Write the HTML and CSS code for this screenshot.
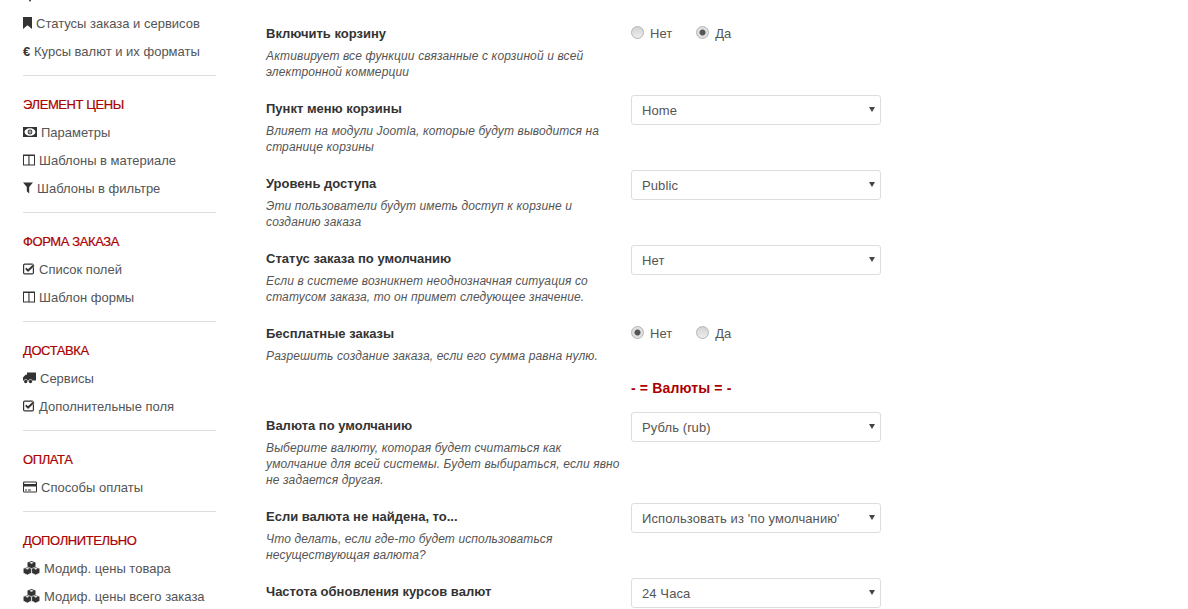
FILE: index.html
```html
<!DOCTYPE html>
<html lang="ru">
<head>
    <meta charset="UTF-8">
    <meta name="viewport" content="width=device-width, initial-scale=1.0">
    <title>Настройки корзины</title>
    <link rel="stylesheet" href="styles.css">
</head>
<body>
    <svg class="sprite" aria-hidden="true">
        <symbol id="i-marker" viewBox="0 0 14 14"><path d="M7 14 3.200 7.500A4.400 4.400 0 1 1 10.800 7.500Z"/></symbol>
        <symbol id="i-bookmark" viewBox="0 0 9 12"><path d="M0 0h9v12L4.500 8.200 0 12Z"/></symbol>
        <symbol id="i-money" viewBox="0 0 14 10"><path fill-rule="evenodd" d="M0 0h14v10H0ZM7 1.200C3.800 1.200 1.600 3 1.600 5S3.800 8.800 7 8.800 12.400 7 12.400 5 10.200 1.200 7 1.200Z"/><path fill-rule="evenodd" d="M7 2.600a2.400 2.400 0 1 1 0 4.800 2.400 2.400 0 0 1 0-4.800ZM7 3.600a1.400 1.400 0 1 0 0 2.800 1.400 1.400 0 0 0 0-2.800Z"/><path d="M6.600 3.800h.8v2.400h-.8Z"/></symbol>
        <symbol id="i-columns" viewBox="0 0 12 11"><path fill-rule="evenodd" d="M0 0h12v11H0ZM1 1.500V10h4.400V1.500ZM6.500 1.500V10H11V1.500Z"/></symbol>
        <symbol id="i-filter" viewBox="0 0 10 11"><path d="M0 0h10L6.200 4.600V11L3.800 8.800V4.600Z"/></symbol>
        <symbol id="i-check" viewBox="0 0 12 11"><path fill-rule="evenodd" d="M1.800 0h7.400A1.800 1.800 0 0 1 11 1.800v7.400A1.800 1.800 0 0 1 9.200 11H1.800A1.800 1.800 0 0 1 0 9.200V1.800A1.800 1.800 0 0 1 1.800 0ZM1.800 1.200a.6.6 0 0 0-.6.6v7.400a.6.6 0 0 0 .6.6h7.400a.6.6 0 0 0 .6-.6V1.800a.6.6 0 0 0-.6-.6Z"/><path stroke="#fff" stroke-width=".5" d="M1.900 5.400 3.400 3.900 5 5.500 10 .8 11.700 2.400 5 8.800Z"/></symbol>
        <symbol id="i-truck" viewBox="0 0 13 11"><path d="M4 0h9v8H9.300a1.900 1.900 0 0 0-3.600 0H4.500a1.900 1.900 0 0 0-3.600 0H0V5L2.600 2.200H4Z"/><circle cx="2.700" cy="9" r="1.700"/><circle cx="7.500" cy="9" r="1.700"/></symbol>
        <symbol id="i-card" viewBox="0 0 14 11"><path fill-rule="evenodd" d="M1.200 0h11.600A1.200 1.200 0 0 1 14 1.200v8.600a1.200 1.200 0 0 1-1.200 1.200H1.200A1.200 1.200 0 0 1 0 9.800V1.200A1.200 1.200 0 0 1 1.200 0ZM1 5v4.800a.2.200 0 0 0 .2.200h11.600a.2.200 0 0 0 .2-.2V5ZM1.200 1v1.600h11.600V1Z"/><path d="M2 8h2v1H2ZM5 8h3v1H5Z"/></symbol>
        <symbol id="i-cubes" viewBox="0 0 17 14"><path d="M8.500 0 12.500 1.500v4.800L8.500 7.800 4.500 6.300V1.500Z"/><path stroke="#fff" stroke-width=".6" d="M4.300 6 8.400 7.500v4.500L4.300 14 .2 12V7.500Z"/><path stroke="#fff" stroke-width=".6" d="M12.700 6 16.800 7.500v4.500L12.700 14 8.600 12V7.500Z"/><path fill="#fff" d="M8.500 1 6.300 1.800 8.500 2.700 10.700 1.800ZM4.300 7 2.200 7.800 4.300 8.600 6.400 7.800ZM12.700 7 10.600 7.800 12.700 8.600 14.800 7.800Z"/></symbol>
    </svg>

    <div class="page">
        <aside class="sidebar">
            <a class="nav-item nav-cut"><svg class="ico w14"><use href="#i-marker"/></svg></a>
            <a class="nav-item"><svg class="ico w9"><use href="#i-bookmark"/></svg>Статусы заказа и сервисов</a>
            <a class="nav-item"><span class="euro">€</span>Курсы валют и их форматы</a>
            <hr>
            <h4>Элемент цены</h4>
            <a class="nav-item"><svg class="ico w14"><use href="#i-money"/></svg>Параметры</a>
            <a class="nav-item"><svg class="ico w12"><use href="#i-columns"/></svg>Шаблоны в материале</a>
            <a class="nav-item"><svg class="ico w10"><use href="#i-filter"/></svg>Шаблоны в фильтре</a>
            <hr>
            <h4>Форма заказа</h4>
            <a class="nav-item"><svg class="ico w12"><use href="#i-check"/></svg>Список полей</a>
            <a class="nav-item"><svg class="ico w12"><use href="#i-columns"/></svg>Шаблон формы</a>
            <hr>
            <h4>Доставка</h4>
            <a class="nav-item"><svg class="ico w13"><use href="#i-truck"/></svg>Сервисы</a>
            <a class="nav-item"><svg class="ico w12"><use href="#i-check"/></svg>Дополнительные поля</a>
            <hr>
            <h4>Оплата</h4>
            <a class="nav-item"><svg class="ico w14"><use href="#i-card"/></svg>Способы оплаты</a>
            <hr>
            <h4>Дополнительно</h4>
            <a class="nav-item"><svg class="ico w17"><use href="#i-cubes"/></svg>Модиф. цены товара</a>
            <a class="nav-item"><svg class="ico w17"><use href="#i-cubes"/></svg>Модиф. цены всего заказа</a>
        </aside>

        <main class="settings">
            <div class="field">
                <div class="info">
                    <label>Включить корзину</label>
                    <p>Активирует все функции связанные с корзиной и всей электронной коммерции</p>
                </div>
                <div class="radios">
                    <label><input type="radio" name="enable">Нет</label>
                    <label><input type="radio" name="enable" checked>Да</label>
                </div>
            </div>
            <div class="field">
                <div class="info">
                    <label>Пункт меню корзины</label>
                    <p>Влияет на модули Joomla, которые будут выводится на страницe корзины</p>
                </div>
                <div class="select"><select><option>Home</option></select></div>
            </div>
            <div class="field">
                <div class="info">
                    <label>Уровень доступа</label>
                    <p>Эти пользователи будут иметь доступ к корзине и созданию заказа</p>
                </div>
                <div class="select"><select><option>Public</option></select></div>
            </div>
            <div class="field">
                <div class="info">
                    <label>Статус заказа по умолчанию</label>
                    <p>Если в системе возникнет неоднозначная ситуация со статусом заказа, то он примет следующее значение.</p>
                </div>
                <div class="select"><select><option>Нет</option></select></div>
            </div>
            <div class="field field-short">
                <div class="info">
                    <label>Бесплатные заказы</label>
                    <p>Разрешить создание заказа, если его сумма равна нулю.</p>
                </div>
                <div class="radios">
                    <label><input type="radio" name="free" checked>Нет</label>
                    <label><input type="radio" name="free">Да</label>
                </div>
            </div>
            <div class="group-title">- = Валюты = -</div>
            <div class="field">
                <div class="info">
                    <label>Валюта по умолчанию</label>
                    <p>Выберите валюту, которая будет считаться как умолчание для всей системы. Будет выбираться, если явно не задается другая.</p>
                </div>
                <div class="select"><select><option>Рубль (rub)</option></select></div>
            </div>
            <div class="field">
                <div class="info">
                    <label>Если валюта не найдена, то...</label>
                    <p>Что делать, если где-то будет использоваться несуществующая валюта?</p>
                </div>
                <div class="select"><select><option>Использовать из 'по умолчанию'</option></select></div>
            </div>
            <div class="field">
                <div class="info">
                    <label>Частота обновления курсов валют</label>
                </div>
                <div class="select"><select><option>24 Часа</option></select></div>
            </div>
        </main>
    </div>
</body>
</html>
```

FILE: styles.css
```css
html, body {
    margin: 0;
    height: 609px;
    overflow: hidden;
    background: #fff;
}
body {
    color: #333;
    font-family: "Liberation Sans", Arial, sans-serif;
    font-size: 13px;
}
.sprite {
    display: none;
}
.page {
    display: flex;
    align-items: flex-start;
}

/* sidebar */
.sidebar {
    width: 193px;
    margin-left: 23px;
    flex-shrink: 0;
    padding-top: 9px;
}
.nav-item {
    display: flex;
    align-items: center;
    height: 28px;
    color: #555;
}
.nav-cut {
    margin-top: -28px;
}
.ico {
    height: 14px;
    margin-right: 4px;
    fill: #333;
    flex-shrink: 0;
}
.w9 { width: 9px; }
.w10 { width: 10px; }
.w12 { width: 12px; }
.w13 { width: 13px; }
.w14 { width: 14px; }
.w17 { width: 17px; }
.euro {
    width: 7px;
    margin-right: 4px;
    color: #333;
    font-weight: bold;
}
.sidebar hr {
    height: 1px;
    margin: 10px 0 14px;
    border: 0;
    background: #ddd;
}
.sidebar h4 {
    margin: 0;
    height: 28px;
    line-height: 30px;
    color: #a00;
    font-size: 13px;
    font-weight: normal;
    letter-spacing: -0.4px;
    text-transform: uppercase;
    -webkit-text-stroke: 0.2px #a00;
}

/* settings */
.settings {
    margin-left: 50px;
    padding-top: 23px;
    width: 615px;
}
.field {
    display: grid;
    grid-template-columns: 365px 250px;
    margin-bottom: 18px;
}
.field-short {
    margin-bottom: 14px;
}
.info label {
    display: block;
    padding-top: 1px;
    line-height: 20px;
    font-weight: bold;
}
.info p {
    width: 355px;
    margin: 4px 0 0;
    color: #555;
    font-size: 12px;
    font-style: italic;
    letter-spacing: 0.13px;
    line-height: 16px;
}
.radios {
    display: flex;
    gap: 24px;
    height: 20px;
    color: #555;
}
.radios label {
    display: flex;
    align-items: center;
}
.radios input {
    appearance: none;
    width: 13px;
    height: 13px;
    margin: -2px 6px 0 0;
    border: 1px solid #b4b4b4;
    border-radius: 50%;
    background: linear-gradient(#d4d4d4, #ececec);
}
.radios input:checked {
    background: radial-gradient(circle, #555 0 2.500px, #e0e0e0 3.500px);
}
.select {
    position: relative;
    height: 30px;
    margin-top: -3px;
}
.select select {
    appearance: none;
    display: block;
    width: 100%;
    height: 30px;
    padding: 0 10px;
    border: 1px solid #ddd;
    border-radius: 3px;
    background: #fff;
    color: #555;
    font-family: inherit;
    font-size: 13px;
    letter-spacing: 0.1px;
}
.select::after {
    content: "";
    position: absolute;
    right: 6px;
    top: 12px;
    border: 3px solid transparent;
    border-top: 5px solid #444;
    border-bottom: 0;
}
.group-title {
    height: 20px;
    margin: 0 0 17px 365px;
    color: #a00;
    font-size: 14px;
    font-weight: bold;
    letter-spacing: 0.15px;
    line-height: 20px;
}
```
